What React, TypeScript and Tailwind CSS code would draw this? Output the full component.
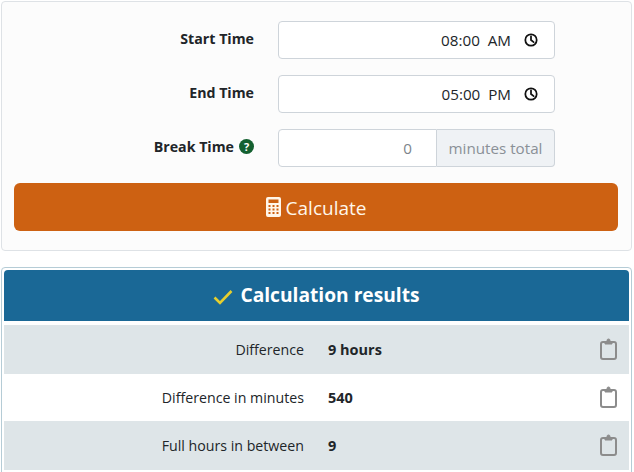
import type { ReactNode } from "react";

function ClockIcon() {
  return (
    <svg viewBox="0 0 16 16" className="w-[14px] h-[14px] ml-[13px] mr-[16px]" fill="none" stroke="#111" strokeWidth="2">
      <circle cx="8" cy="8" r="6.500" />
      <path d="M8 3.800V8l3 2.400" strokeLinecap="round" />
    </svg>
  );
}

function CalculatorIcon() {
  return (
    <svg viewBox="0 0 15 20" className="w-[15px] h-[20px] mr-[5px] mt-[-2px]">
      <path
        fill="#fff6ea"
        fillRule="evenodd"
        d="M2 0h11a2 2 0 0 1 2 2v16a2 2 0 0 1-2 2H2a2 2 0 0 1-2-2V2a2 2 0 0 1 2-2zM2.500 2.500v3.500h10V2.500zM2.500 8v2h2V8zM6.500 8v2h2V8zM10.500 8v2h2V8zM2.500 11.500v2h2v-2zM6.500 11.500v2h2v-2zM10.500 11.500v2h2v-2zM2.500 15v2h2v-2zM6.500 15v2h2v-2zM10.500 15v2h2v-2z"
      />
    </svg>
  );
}

function CheckIcon() {
  return (
    <svg viewBox="0 0 20 16" className="w-[20px] h-[16px] mr-[7px] mt-[2px]" fill="none" stroke="#e6cf2e" strokeWidth="2.600">
      <path d="M1.500 8.500l5.500 5.500L18.500 2" />
    </svg>
  );
}

function ClipboardIcon() {
  return (
    <svg viewBox="0 0 17 22" className="w-[17px] h-[22px] mr-[12px] mt-[-2px]" fill="none" stroke="#8c8c8c" strokeWidth="2">
      <path d="M5 4H3a2 2 0 0 0-2 2v13a2 2 0 0 0 2 2h11a2 2 0 0 0 2-2V6a2 2 0 0 0-2-2h-2" />
      <path d="M5 3.500h2V2.500a1.500 1.500 0 0 1 3 0v1h2V6H5z" fill="#8c8c8c" stroke="#8c8c8c" strokeWidth="1" />
    </svg>
  );
}

function FormRow({ label, children, help }: { label: string; children: ReactNode; help?: boolean }) {
  return (
    <div className="flex items-center h-[38px]">
      <div className="w-[240px] mr-[24px] flex justify-end items-center font-bold text-[14.200px] text-[#212529] -mt-[3px]">
        {label}
        {help && (
          <span className="ml-[5px] w-[15px] h-[15px] rounded-full bg-[#146030] text-white text-[11px] font-bold leading-[15px] text-center">
            ?
          </span>
        )}
      </div>
      {children}
    </div>
  );
}

function TimeInput({ value }: { value: string }) {
  return (
    <div className="w-[277px] h-[38px] bg-white border border-[#ced4da] rounded-[4px] flex items-center justify-end text-[15.200px] text-[#212529] whitespace-pre">
      {value}
      <ClockIcon />
    </div>
  );
}

function ResultRow({ label, value, shaded }: { label: string; value: string; shaded?: boolean }) {
  return (
    <div className={`flex items-center h-full ${shaded ? "bg-[#dee5e8]" : "bg-white"}`}>
      <div className="w-[300px] text-right text-[14.200px] text-[#212529]">{label}</div>
      <div className="ml-[24px] flex-1 font-bold text-[14.500px] text-[#212529]">{value}</div>
      <ClipboardIcon />
    </div>
  );
}

export default function App() {
  return (
    <div className="w-[634px] h-[472px] overflow-hidden bg-white pt-px px-px font-['Open_Sans','Noto_Sans',sans-serif]">
      <div className="w-[631px] h-[250px] bg-[#fcfcfc] border border-[#dee2e6] rounded-[4px] pt-[19px] px-[12px]">
        <div className="flex flex-col gap-[16px]">
          <FormRow label="Start Time">
            <TimeInput value="08:00  AM" />
          </FormRow>
          <FormRow label="End Time">
            <TimeInput value="05:00  PM" />
          </FormRow>
          <FormRow label="Break Time" help>
            <div className="w-[277px] h-[38px] flex text-[15.200px]">
              <div className="w-[159px] bg-white border border-[#ced4da] rounded-l-[4px] flex items-center justify-end pr-[24px] text-[#7d848b]">
                0
              </div>
              <div className="flex-1 bg-[#eff2f5] border border-l-0 border-[#ced4da] rounded-r-[4px] flex items-center justify-center text-[#8a9097]">
                minutes total
              </div>
            </div>
          </FormRow>
        </div>
        <button className="mt-[16px] w-[604px] h-[48px] pt-[2px] bg-[#cd6112] rounded-[6px] flex items-center justify-center text-[19px] text-[#fff6ea]">
          <CalculatorIcon />
          Calculate
        </button>
      </div>
      <div className="mt-[16px] w-[631px] h-[220px] border border-[#b5ccd6] rounded-t-[4px] p-[2px]">
        <div className="h-[51px] bg-[#1a6896] rounded-t-[4px] flex items-center justify-center text-white font-bold text-[19.200px]">
          <CheckIcon />
          Calculation results
        </div>
        <div className="mt-[4px] grid grid-rows-[49px_47px_49px] h-[145px]">
          <ResultRow label="Difference" value="9 hours" shaded />
          <ResultRow label="Difference in minutes" value="540" />
          <ResultRow label="Full hours in between" value="9" shaded />
        </div>
      </div>
    </div>
  );
}
